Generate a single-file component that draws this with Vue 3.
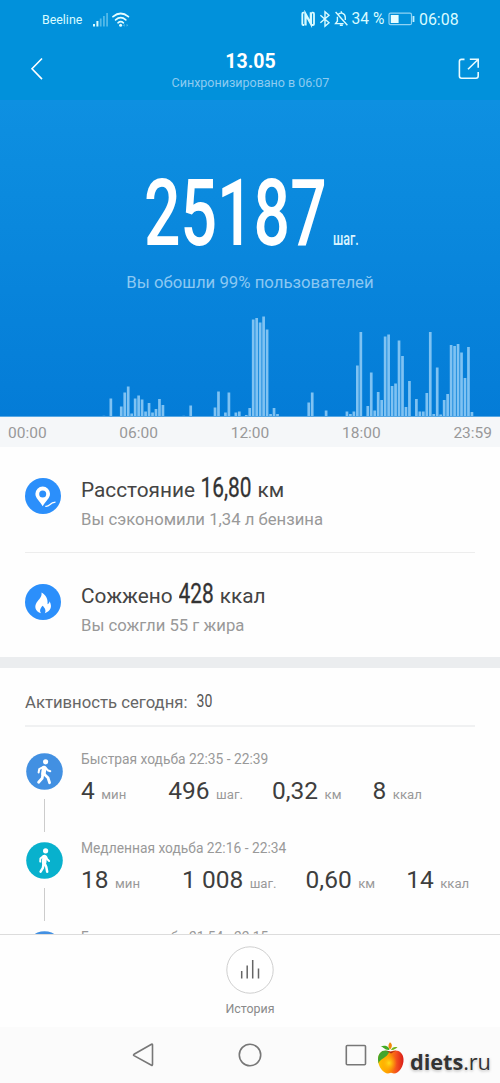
<script setup>
const bars = [
  [-2, 0.7], [0, 18], [3, 10], [4, 24], [5, 30], [6, 3], [7, 18], [8, 21], [9, 17], [10, 5], [11, 13.5],
  [12, 4], [13, 7.5], [14, 17.5], [15, 11.5], [21, 0.7], [23, 11], [30, 9], [31, 25], [33, 4], [34, 24],
  [36, 4], [37, 5], [39, 1.5], [40, 8.5], [41, 97], [42, 98.5], [43, 94], [44, 100], [45, 87], [46, 2.5],
  [47, 8.5], [48, 2.5], [57, 14], [58, 24], [62, 6], [68, 5], [69, 2.5], [70, 5], [71, 51], [72, 84.5],
  [74, 10.5], [75, 44], [76, 6], [77, 24.5], [78, 16.5], [79, 80], [80, 82], [81, 30.5], [82, 33],
  [83, 76], [84, 60.5], [85, 9.5], [86, 35.5], [88, 17.5], [89, 5], [90, 5], [91, 23.5], [92, 84.5],
  [93, 2.5], [94, 49], [95, 2], [96, 16.5], [97, 22.5], [98, 71.5], [99, 70.5], [100, 72.5], [101, 64],
  [102, 38.5], [103, 69.5], [104, 4.5],
]
const hours = ['00:00', '06:00', '12:00', '18:00', '23:59']
const metrics = [
  { icon: 'pin', name: 'Расстояние', value: '16,80', width: 51, unit: 'км', note: 'Вы сэкономили 1,34 л бензина' },
  { icon: 'fire', name: 'Сожжено', value: '428', width: 35.5, unit: 'ккал', note: 'Вы сожгли 55 г жира' },
]
const entries = [
  { pace: 'fast', title: 'Быстрая ходьба 22:35 - 22:39', stats: [['4', 'мин'], ['496', 'шаг.'], ['0,32', 'км'], ['8', 'ккал']] },
  { pace: 'slow', title: 'Медленная ходьба 22:16 - 22:34', stats: [['18', 'мин'], ['1 008', 'шаг.'], ['0,60', 'км'], ['14', 'ккал']] },
  { pace: 'fast', title: 'Быстрая ходьба 21:54 - 22:15', stats: [] },
]
</script>

<template>
  <div class="screen">
    <header class="top">
      <div class="status">
        <span class="carrier">Beeline</span>
        <svg class="signal" width="38" height="18" viewBox="0 0 38 18">
          <g fill="#d9fbff">
            <rect x="1" y="14" width="2" height="2.5" /><rect x="4.4" y="11" width="2" height="5.5" />
            <g opacity=".38"><rect x="7.8" y="8.5" width="1.8" height="8" /><rect x="11" y="6" width="1.8" height="10.5" /><rect x="14.2" y="3" width="1.8" height="13.5" /></g>
          </g>
          <g fill="none" stroke="#e4fdff" stroke-width="1.7" stroke-linecap="round">
            <path d="M21 6.700 Q28.700 .3 36.400 6.700" /><path d="M23.600 9.900 Q28.700 5.500 33.800 9.900" /><path d="M26 12.800 Q28.700 10.500 31.400 12.800" />
          </g>
          <circle cx="28.600" cy="15.200" r="1.500" fill="#e4fdff" />
          <path d="M32.600 13.700 31 15.200l1.600 1.500zM34.600 13.700l1.600 1.500-1.600 1.500z" fill="#d9fbff" opacity=".4" />
        </svg>
        <svg class="flags" width="50" height="18" viewBox="0 0 50 18">
          <g fill="none" stroke="#d9fbff">
            <path d="M4.500 2.700H3.300Q2.300 2.700 2.300 3.700V14Q2.300 15 3.300 15H4M11.800 2.700H13Q14 2.700 14 3.700V14Q14 15 13 15H11.800" stroke-width="1.800" />
            <path d="M5.500 15.500V4L10.900 13.700V2.200" stroke-width="2.300" />
            <path d="M20.400 5.300 29 12.700 25 16.200V1.800l4 3.500-8.600 7.400" stroke-width="1.400" />
            <path d="M35.600 2 47.400 15.200M37.400 6.800v4.500L35.600 13.600h8M38.400 4.300Q40 2.700 42.600 3.300 45.300 4.200 45.300 7.500V10M41.300 1.200v2M39.800 15.300h3" stroke-width="1.400" />
          </g>
        </svg>
        <span class="percent">34 %</span>
        <svg class="battery" width="28" height="14" viewBox="0 0 28 14">
          <rect x="1" y="1.200" width="22.500" height="11.500" rx="1.500" fill="none" stroke="#90d3f4" stroke-width="1.200" />
          <rect x="2.800" y="3" width="7.800" height="8" fill="#e7fdff" /><path d="M25.500 4v6" stroke="#bfeeff" stroke-width="1.800" />
        </svg>
        <span class="clock">06:08</span>
      </div>
      <div class="titlebar">
        <svg class="back" width="14" height="24" viewBox="0 0 14 24"><path d="M12 1.500 2 11.800 12 22.100" fill="none" stroke="#fff" stroke-width="1.600" /></svg>
        <div class="heading">
          <h1>13.05</h1>
          <p>Синхронизировано в 06:07</p>
        </div>
        <svg class="share" width="22" height="22" viewBox="0 0 22 22" fill="none" stroke="#e9fbff" stroke-width="1.600">
          <path d="M6.500 1.400H3.500Q1.400 1.400 1.400 3.500V18Q1.400 20.200 3.500 20.200H18Q20.200 20.200 20.200 18V14M10 11.300 20 1.500M11.800 1.300H20.200V9.800" />
        </svg>
      </div>
    </header>

    <section class="hero">
      <div class="total">
        <svg class="count" width="184" height="118" viewBox="0 0 184 118">
          <text transform="translate(0 91) scale(.695 1)">25187</text>
        </svg>
        <svg class="count-unit" width="28" height="28" viewBox="0 0 28 28">
          <text transform="translate(0 20) scale(.72 1)">шаг.</text>
        </svg>
      </div>
      <p class="rank">Вы обошли 99% пользователей</p>
      <svg class="chart" width="500" height="104" viewBox="0 0 500 104">
        <rect v-for="[slot, h] in bars" :key="slot" :x="109.5 + slot * 3.472" :y="103.5 - h" width="2.7" :height="h" fill="#7fc2f2" />
        <rect x="0" y="103" width="500" height="1" fill="#57a8e4" />
      </svg>
    </section>
    <div class="axis"><span v-for="h in hours" :key="h">{{ h }}</span></div>

    <section class="metrics">
      <article v-for="m in metrics" :key="m.name" class="metric">
        <svg class="badge" width="36" height="36" viewBox="0 0 36 36">
          <circle cx="18" cy="18" r="18" fill="#2b8ffb" />
          <g v-if="m.icon === 'pin'">
            <path fill-rule="evenodd" fill="#fff" d="M17.700 8.500a7.300 7.300 0 0 0-7.300 7.300C10.400 20.500 14.400 22.500 17.700 28.200 21 22.500 25 20.500 25 15.800A7.300 7.300 0 0 0 17.700 8.500Zm0 4a3.500 3.500 0 1 1 0 7 3.500 3.500 0 0 1 0-7Z" />
            <path d="M20.300 28.300C25.500 29 23.700 24.600 30.500 24.200" fill="none" stroke="#fff" stroke-width="1.200" />
          </g>
          <path v-else fill="#fff" d="M16.500 8.500c.5 4-1.700 6-3.700 8.500-2.900 3.400-4.100 8.300 1.200 11.400l2 .8c-1.900-2.800-.5-5.200 1.600-7.500 2.200 2.100 3.900 4.600 2.200 7.500 5.700-1.700 7.900-6.500 4.700-11.900-.2 1.700-.8 2.600-2 3 .7-5-1.400-9.100-6-11.800Z" />
        </svg>
        <div>
          <div class="metric-title">
            <span>{{ m.name }}</span>
            <svg :width="m.width" height="36"><text transform="translate(-.5 27) scale(.76 1)">{{ m.value }}</text></svg>
            <span>{{ m.unit }}</span>
          </div>
          <p class="note">{{ m.note }}</p>
        </div>
      </article>
    </section>

    <section class="activity">
      <h2>Активность сегодня:
        <svg width="18" height="26"><text transform="translate(1.500 19) scale(.76 1)">30</text></svg>
      </h2>
      <article v-for="e in entries" :key="e.title" class="entry">
        <div class="rail">
          <svg class="walker" :class="e.pace" width="37" height="37" viewBox="0 0 37 37">
            <circle cx="18.500" cy="18.500" r="18.300" />
            <g fill="none" stroke="#fff" stroke-linecap="round" stroke-linejoin="round">
              <circle class="head" cx="19.600" cy="8.800" r="2.600" />
              <template v-if="e.pace === 'fast'">
                <path d="M18.200 15 17.400 20.500" stroke-width="4.600" />
                <path d="M17.500 13.800 13.200 16.200 12.600 19.500M19.800 15 21.600 17.200 24.300 18.200" stroke-width="2" />
                <path d="M18 21 22 24.800 23.600 29.700M16.800 21.500 16.200 25.300 12.600 29.300" stroke-width="2.800" />
              </template>
              <template v-else>
                <path d="M18.600 15 18.100 20.500" stroke-width="4.600" />
                <path d="M17.500 13.900 14.400 16.400 14.200 19.600M20.300 15 21.300 17.300 23.100 19" stroke-width="1.900" />
                <path d="M18.500 21 20.300 25 21.200 29.700M17.500 21.500 16.900 25.800 14.600 29.700" stroke-width="2.500" />
              </template>
            </g>
          </svg>
          <i></i>
        </div>
        <div class="details">
          <p class="entry-title">{{ e.title }}</p>
          <div class="stats">
            <span v-for="[value, unit] in e.stats" :key="unit" class="stat"><b>{{ value }}</b><small>{{ unit }}</small></span>
          </div>
        </div>
      </article>
    </section>

    <footer class="history">
      <svg width="48" height="48" viewBox="0 0 48 48">
        <circle cx="24" cy="24" r="23.200" fill="#fff" stroke="#cfcfcf" />
        <path d="M15.700 25v7.500M21.200 19.500v13M26.700 14v18.500M32.500 22.500v10" stroke="#666" stroke-width="1.500" />
      </svg>
      <span>История</span>
    </footer>

    <nav class="nav">
      <svg width="250" height="28" viewBox="0 0 250 28" fill="none" stroke="#777" stroke-width="1.600">
        <path d="M20.500 3.800V23.600Q20.500 24.700 19.500 24.200L2 14.600Q1 14 2 13.300L19.500 3.200Q20.500 2.800 20.500 3.800Z" />
        <circle cx="118" cy="14" r="10.700" />
        <rect x="214.300" y="4.500" width="19.200" height="19.200" rx="1" />
      </svg>
      <div class="watermark">
        <svg width="28" height="34" viewBox="0 0 28 34">
          <defs>
            <linearGradient id="skin"><stop offset="0" stop-color="#ffc400" /><stop offset=".4" stop-color="#ff9d00" /><stop offset=".72" stop-color="#f4511e" /><stop offset="1" stop-color="#d91c18" /></linearGradient>
            <radialGradient id="glow"><stop offset="0" stop-color="#ffdc18" /><stop offset="1" stop-color="#ffb000" stop-opacity="0" /></radialGradient>
          </defs>
          <path d="M13.500 11C7 7.500 1 11 1 18.500 1 26 6.500 32.500 11 32.500l3-.7 3 .7C22 32.500 27 25 26.500 18 26 10.500 19.500 7.500 13.500 11Z" fill="url(#skin)" />
          <ellipse cx="12" cy="22" rx="8" ry="9" fill="url(#glow)" />
          <path d="M12.500 10.500C6 7.800 1 11.500 1 18.500l.5 4C3 17.500 9.500 17.500 12.500 10.500Z" fill="#43a52c" />
          <path d="M9.500 9.800Q14 11.500 19 9.500L14 12.500Z" fill="#b62813" />
          <path d="M12.300 9C12.500 5.500 8.500 3.500 3.500 5.300 6.500 6 8 9.500 12.300 9Z" fill="#43aa25" />
          <path d="M13 8.500C10.500 5.500 11.500 3 13 1.200 15.500 3 15.500 6 13 8.500Z" fill="#f18a0a" />
          <path d="M14 9C15 6.500 17.500 5.500 20.500 6.500 18.500 7.500 17 9.500 14 9Z" fill="#73b51b" />
        </svg>
        <span><b>diets</b>.ru</span>
      </div>
    </nav>
  </div>
</template>

<style>
body { margin: 0; background: #fff; }
</style>

<style scoped>
* { box-sizing: border-box; }
p, h1, h2 { margin: 0; }
svg { display: block; flex: none; }
.screen { width: 500px; height: 1083px; display: flex; flex-direction: column; overflow: hidden; background: #fefefe; font-family: Roboto, "Noto Sans", sans-serif; }
.top { height: 100px; flex: none; background: #0191db; color: #d9fbff; }
.status { height: 38px; display: flex; align-items: center; padding-left: 42px; font-size: 16px; white-space: nowrap; }
.carrier { width: 50px; font-size: 12.400px; }
.signal { margin-top: 0; }
.flags { margin-left: 169.500px; }
.percent { width: 36px; margin-left: 2px; font-size: 15.600px; }
.battery { margin-left: 0; }
.clock { margin-left: 3.500px; font-size: 15.900px; }
.titlebar { height: 62px; display: flex; padding: 0 20px 0 30px; }
.back { margin-top: 19px; }
.heading { flex: 1; text-align: center; padding-left: 6px; padding-right: 7px; }
h1 { margin-top: 12px; font-size: 19.500px; line-height: 24px; font-weight: 700; color: #fff; }
.heading p { margin-top: 1px; font-size: 12.500px; line-height: 16px; color: #8dcbf0; }
.share { margin-top: 20px; }
.hero { height: 317px; flex: none; background: linear-gradient(#0e90e1, #047cd7); display: flex; flex-direction: column; }
.total { height: 172px; display: flex; align-items: flex-end; padding-left: 144px; }
.count text { font-size: 92.500px; font-weight: 500; fill: #fff; }
.count-unit { margin: 0 0 19.500px 5px; }
.count-unit text { font-size: 17.500px; font-weight: 500; fill: #d9f4ff; }
.rank { text-align: center; font-size: 16.750px; line-height: 20px; color: #8cc8f2; }
.chart { margin-top: auto; }
.axis { height: 30px; flex: none; background: #f5f7f9; display: flex; justify-content: space-between; padding: 0 8px; line-height: 33px; font-size: 15.500px; color: #999; }
.metrics { height: 210px; flex: none; padding: 0 25px; }
.metric { height: 105.500px; display: flex; gap: 20px; padding-top: 30px; border-bottom: 1px solid #ededed; }
.metric:last-child { border: 0; }
.badge { margin-top: 1px; }
.metric-title { height: 28px; margin-top: -1px; display: flex; align-items: center; gap: 5.800px; font-size: 20.800px; line-height: 28px; color: #444; }
.metric-title svg { margin-top: -4px; }
.metric-title text { font-size: 27.500px; font-weight: 400; fill: #333; stroke: #333; stroke-width: .3px; }
.note { margin-top: 6px; font-size: 16.700px; line-height: 20px; color: #999; }
.activity { height: 277px; flex: none; overflow: hidden; border-top: 11px solid #ebedef; padding: 0 25px; }
h2 { height: 59px; display: flex; align-items: center; gap: 8px; padding-top: 11px; border-bottom: 2px solid #f0f1f2; font-size: 16.700px; font-weight: 400; color: #666; }
h2 text { font-size: 18.500px; font-weight: 400; fill: #555; }
h2 svg { margin-top: -2px; }
.entry { height: 89px; display: flex; padding-top: 23px; }
.rail { width: 38px; flex: none; display: flex; flex-direction: column; align-items: center; padding-top: 2.500px; }
.rail i { width: 1px; height: 33px; flex: none; margin-top: 9px; background: #ccc; }
.walker.fast { fill: #4290e2; }
.walker.slow { fill: #08b1cd; }
.walker .head { fill: #fff; stroke: none; }
.details { margin-left: 18px; white-space: nowrap; }
.entry-title { font-size: 13.800px; line-height: 18px; color: #999; }
.stats { display: flex; height: 30px; margin-top: 8px; line-height: 30px; color: #3e3e3e; }
.stat b { font-size: 24.500px; font-weight: 400; }
.stat small { margin-left: 6.500px; font-size: 13.200px; color: #999; }
.stat:nth-child(1) { margin-right: 42px; }
.stat:nth-child(2) { margin-right: 29px; }
.stat:nth-child(3) { margin-right: 31px; }
.history { height: 93px; flex: none; border-top: 1px solid #dcdcdc; background: #fefefe; display: flex; flex-direction: column; align-items: center; padding-top: 11px; font-size: 12.400px; color: #8a8a8a; }
.history span { margin-top: 6.500px; line-height: 16px; }
.nav { height: 56px; flex: none; background: #fbfbfb; display: flex; padding-left: 132px; }
.nav > svg { margin-top: 14px; }
.watermark { display: flex; margin: 14px 0 0 -5px; color: #333; font-family: "Open Sans", sans-serif; font-size: 21.800px; white-space: nowrap; }
.watermark span { margin: 7px 0 0 5px; line-height: 28px; letter-spacing: -.1px; text-shadow: 0 0 2px #fff, 0 1px 3px #aaa; }
</style>
